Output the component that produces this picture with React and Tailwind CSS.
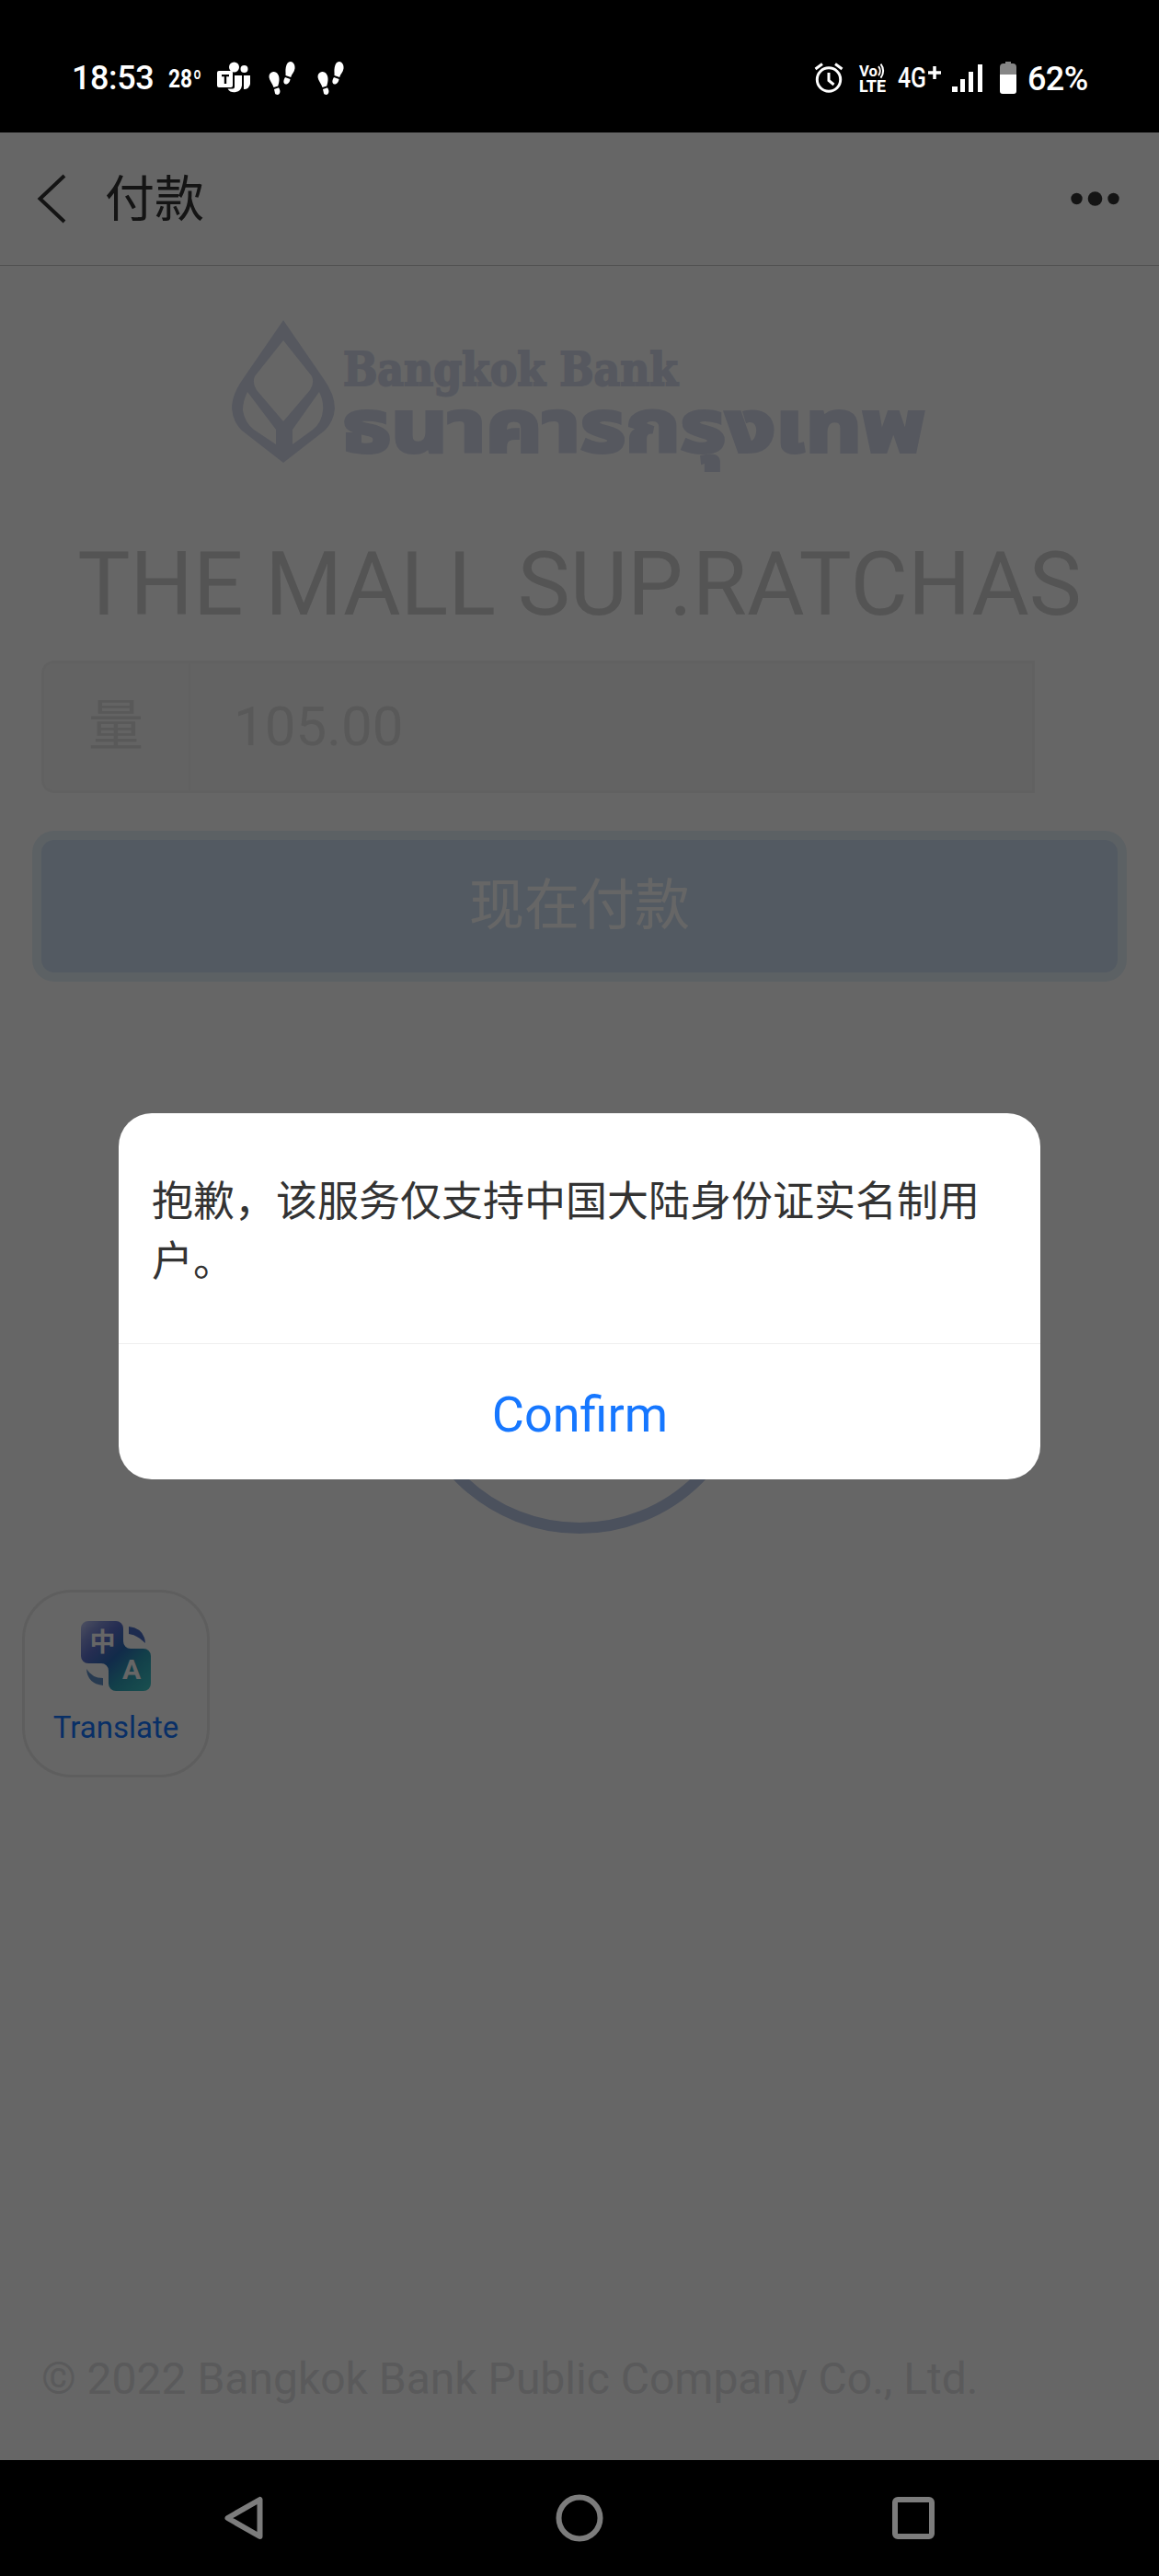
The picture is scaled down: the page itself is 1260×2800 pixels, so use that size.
import React from 'react';

const StatusBar = () => (
    <div className="h-[144px] bg-black text-white flex items-center justify-between pl-[78px] pr-[77px] pt-[25px] font-medium shrink-0">
        <div className="flex items-center">
            <span className="w-[90px] text-[36px] leading-[42px] whitespace-nowrap tracking-[-0.4px]">18:53</span>
            <svg className="ml-[15px]" width="38" height="40" viewBox="0 0 38 40" fill="#fff">
                <text x="0" y="30" fontSize="27" fontWeight="700" textLength="26" lengthAdjust="spacingAndGlyphs">28</text>
                <text x="27" y="30" fontSize="27" fontWeight="600" textLength="9" lengthAdjust="spacingAndGlyphs">º</text>
            </svg>
            <svg className="ml-[14px]" width="38" height="36" viewBox="0 0 38 36" fill="#fff">
                <circle cx="19.5" cy="6" r="5.5" />
                <circle cx="30.5" cy="8" r="4" />
                <path d="M20 15h8v11a8.500 8.500 0 0 1-15.500 3.500h5.500a2 2 0 0 0 2-2z" />
                <path d="M30 15h7v9a6.500 6.500 0 0 1-7 6z" />
                <rect x="1" y="10" width="17" height="18" rx="2" />
                <path d="M6 14h8v2.200h-2.800V24H8.800v-7.800H6z" fill="#000" />
            </svg>
            <Footprints className="ml-[18px]" />
            <Footprints className="ml-[22px]" />
        </div>
        <div className="flex items-center">
            <svg width="32" height="34" viewBox="0 0 32 34" fill="none" stroke="#fff" strokeWidth="3">
                <circle cx="16" cy="18.500" r="12.700" />
                <path d="M16 11v8.500l5.500 4.500M1.500 7L9 1.500M23 1.500L30.500 7" />
            </svg>
            <svg className="ml-[17px] overflow-visible" width="30" height="36" viewBox="0 0 30 36" fill="#fff">
                <text x="0" y="16" fontSize="17" fontWeight="700" textLength="20" lengthAdjust="spacingAndGlyphs">Vo</text>
                <path d="M21 5a8 8 0 0 1 0 10M23.500 2.500a12 12 0 0 1 0 15" fill="none" stroke="#fff" strokeWidth="2" />
                <text x="0" y="33" fontSize="18.500" fontWeight="800" textLength="29" lengthAdjust="spacingAndGlyphs">LTE</text>
            </svg>
            <svg className="ml-[11px] overflow-visible" width="50" height="38" viewBox="0 0 50 38" fill="#fff">
                <text x="1" y="29" fontSize="31" fontWeight="500" textLength="31" lengthAdjust="spacingAndGlyphs">4G</text>
                <path d="M34 13h14M41 6v14" stroke="#fff" strokeWidth="3.500" />
            </svg>
            <svg className="ml-[9px]" width="36" height="32" viewBox="0 0 36 32" fill="#fff">
                <path d="M1 25h6v6H1zM10 17h5v14h-5zM19 9h5v22h-5zM29 1h5v30h-5z" />
            </svg>
            <svg className="ml-[16px]" width="20" height="37" viewBox="0 0 20 37">
                <path d="M7 1h6v2h2a4 4 0 0 1 4 4v9H1V7a4 4 0 0 1 4-4h2z" fill="#868686" />
                <path d="M1 15h18v18a3 3 0 0 1-3 3H4a3 3 0 0 1-3-3z" fill="#fff" />
            </svg>
            <span className="ml-[11px] mt-[3px] w-[66px] text-[36px] leading-[42px] whitespace-nowrap tracking-[-0.6px]">62%</span>
        </div>
    </div>
);

const Footprints = ({ className }) => (
    <svg className={className} width="31" height="38" viewBox="0 0 31 38" fill="#fff">
        <path d="M6 12c4-.5 7 4 6.500 9-.2 3-.8 4.500-1.200 6.500L6.500 29C5.500 25 2 22 1.500 18 1.200 14.500 3 12.500 6 12z" />
        <path d="M7 31l5-1.700c1.500 2.500 2 4.500.8 6.500-1.300 1.700-4 1.500-4.800-.3z" />
        <path d="M25 1c3 .5 5 3.500 4.500 7.500-.5 4-3.500 6-4.300 9.500L19.500 16c.3-2.500-.5-5 .3-9C20.600 3 22.500.700 25 1z" />
        <path d="M19 18l5.500 2c-.2 3-2.500 6-5 5.500-2.700-.5-2.700-4-.5-7.500z" />
    </svg>
);

const Header = () => (
    <header className="h-[145px] shrink-0 border-b border-[#c8c8c8] bg-white flex items-center justify-between pl-[40px] pr-[42px] text-[#333]">
        <div className="flex items-center">
            <svg width="34" height="54" viewBox="0 0 34 54" fill="none" stroke="#333" strokeWidth="4">
                <path d="M30 2L3.500 27 30 52" />
            </svg>
            <h1 className="ml-[40px] mt-[3px] text-[54px] leading-[60px]">付款</h1>
        </div>
        <svg width="54" height="18" viewBox="0 0 54 18" fill="#333">
            <circle cx="6.500" cy="9" r="6.200" />
            <circle cx="26.500" cy="9" r="7.800" />
            <circle cx="46.500" cy="9" r="6.200" />
        </svg>
    </header>
);

const BankLogo = () => (
    <svg className="mx-auto" width="760" height="180" viewBox="250 345 760 180" fill="#d7dcee">
        <path
            fillRule="evenodd"
            d="M308 348L352 412Q364 429 364 444 363 458 353 468L308 503 263 468Q253 458 252 444 252 429 264 412zM308 370L277 409Q274 417 279 424L308 458 337 424Q342 417 339 409zM269 426Q264 436 264 446 266 459 276 467L300 483V467zM347 426L318 467V483L340 467Q350 459 351 446 352 436 347 426z"
        />
        <g stroke="#d7dcee" strokeLinejoin="miter">
            <text x="373" y="419" fontFamily="'DejaVu Serif'" fontWeight="700" fontSize="51" strokeWidth="2" textLength="364" lengthAdjust="spacingAndGlyphs">Bangkok Bank</text>
            <text x="372" y="491" fontFamily="'Noto Sans Thai', 'Noto Sans', sans-serif" fontWeight="700" fontSize="78" strokeWidth="4" textLength="634" lengthAdjust="spacingAndGlyphs">ธนาคารกรุงเทพ</text>
        </g>
    </svg>
);

const TranslateButton = () => (
    <button className="ml-[24px] mt-[61px] size-[204px] rounded-[54px] border-[3px] border-[#ebebeb] bg-white flex flex-col items-center pt-[31px]">
        <svg width="76" height="76" viewBox="0 0 76 76">
            <defs>
                <linearGradient id="tr" x1="0" y1="0" x2="1" y2="1">
                    <stop offset="0" stopColor="#c2c9f3" />
                    <stop offset=".15" stopColor="#8795dc" />
                    <stop offset=".3" stopColor="#5c70cc" />
                    <stop offset=".5" stopColor="#2b6cb8" />
                    <stop offset=".7" stopColor="#2f9fb8" />
                    <stop offset="1" stopColor="#3fc8c8" />
                </linearGradient>
            </defs>
            <path d="M8 0h30a8 8 0 0 1 8 8v14a8 8 0 0 0 8 8h14a8 8 0 0 1 8 8v30a8 8 0 0 1-8 8H38a8 8 0 0 1-8-8V54a8 8 0 0 0-8-8H8a8 8 0 0 1-8-8V8a8 8 0 0 1 8-8z" fill="url(#tr)" />
            <path d="M52 6q17 2 18 18Q61 15 52 14z" fill="#496cc6" />
            <path d="M6 52q6 10 18 10v8Q7 68 6 52z" fill="#6391c8" />
            <text x="23.500" y="33" textAnchor="middle" fontFamily="'Noto Sans CJK SC'" fontWeight="700" fontSize="28" fill="#fff">中</text>
            <text x="55" y="63" textAnchor="middle" fontFamily="Roboto" fontWeight="700" fontSize="30" fill="#fff">A</text>
        </svg>
        <span className="mt-[17px] text-[33px] leading-[46px] text-[#1677ff]">Translate</span>
    </button>
);

const Dialog = () => (
    <div className="absolute left-[129px] top-[1210px] w-[1002px] h-[398px] rounded-[36px] bg-white overflow-hidden flex flex-col">
        <p className="h-[250px] shrink-0 pt-[64px] pl-[36px] pr-[56px] text-[45px] leading-[65px] text-[#333]">
            抱歉，该服务仅支持中国大陆身份证实名制用户。
        </p>
        <button className="flex-1 border-t border-[#eee] text-[54px] text-[#1677ff] pt-[5px] pl-[1px]">Confirm</button>
    </div>
);

const NavBar = () => (
    <nav className="h-[126px] bg-black shrink-0 flex items-center px-[243px] justify-between">
        <svg width="48" height="52" viewBox="0 0 48 52" fill="none" stroke="#7c7c7c" strokeWidth="6" strokeLinejoin="round">
            <path d="M39.500 6v40L4.500 26z" />
        </svg>
        <svg width="52" height="52" viewBox="0 0 52 52" fill="none" stroke="#7c7c7c" strokeWidth="6">
            <circle cx="26" cy="26" r="22.500" />
        </svg>
        <svg width="48" height="48" viewBox="0 0 48 48" fill="none" stroke="#7c7c7c" strokeWidth="6">
            <rect x="4" y="4" width="40" height="40" rx="3" />
        </svg>
    </nav>
);

const App = () => {
    return (
        <div className="relative w-[1260px] h-[2800px] flex flex-col bg-white overflow-hidden font-[Roboto,'Noto_Sans_CJK_SC',sans-serif]">
            <StatusBar />
            <div className="relative flex-1 flex flex-col">
                <Header />
                <main className="flex-1 flex flex-col">
                    <div className="pt-[56px]">
                        <BankLogo />
                    </div>
                    <h2 className="mt-[53px] text-center text-[96px] leading-[114px] text-[#d2d2d2] whitespace-nowrap">THE MALL SUP.RATCHAS</h2>

                    {/* Amount */}
                    <div className="ml-[45px] mt-[26px] w-[1080px] h-[144px] flex rounded-l-[14px] border-[3px] border-[#f3f3f3] bg-[#f8f8f8] text-[60px] text-[#dedede]">
                        <div className="w-[159px] border-r-2 border-[#f3f3f3] flex items-center justify-center pr-[1px]">量</div>
                        <div className="flex items-center pl-[47px]">105.00</div>
                    </div>
                    <button className="mx-[45px] mt-[51px] h-[144px] shrink-0 rounded-[14px] bg-[#cfe1f5] text-[60px] text-white ring-[10px] ring-[#e6f2fa]">
                        现在付款
                    </button>

                    {/* Loading ring */}
                    <div className="mt-[232px] mx-auto size-[378px] shrink-0 rounded-full border-[12px] border-[#bbcae8]"></div>

                    <TranslateButton />
                    <footer className="mt-auto mb-[58px] ml-[45px] text-[48px] leading-[60px] text-[#e0e2e4]">
                        © 2022 Bangkok Bank Public Company Co., Ltd.
                    </footer>
                </main>
                <div className="absolute inset-0 bg-black/60"></div>
            </div>
            <NavBar />
            <Dialog />
        </div>
    );
};

export default App;
